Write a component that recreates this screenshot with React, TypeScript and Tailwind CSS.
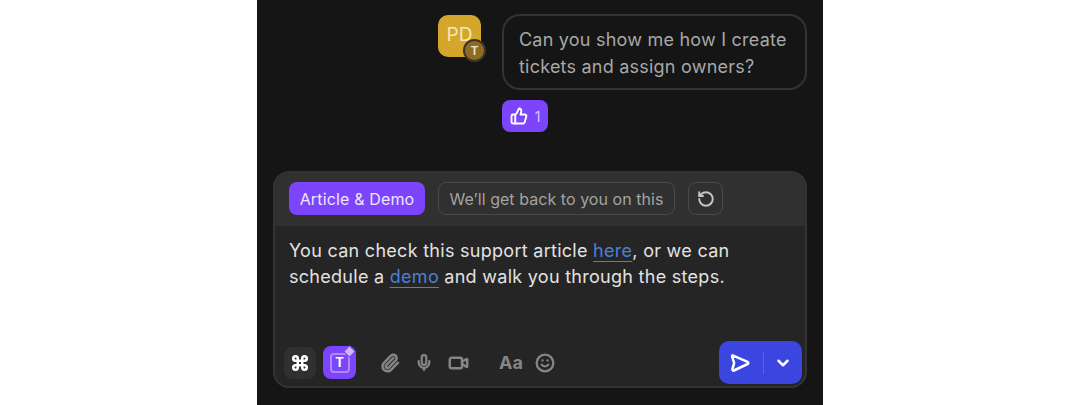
import { ChevronDown, Command, Mic, Paperclip, RotateCcw, Smile, ThumbsUp, Video } from "lucide-react";

const FONT = "font-['Inter','Liberation_Sans',sans-serif]";

function SendIcon() {
  return (
    <svg width="20" height="20" viewBox="0 0 20 20" fill="none" stroke="white" strokeWidth="2.5" strokeLinejoin="round">
      <path d="M3.2 2.6 C2.6 2.1 1.8 2.6 2 3.4 L4 9.4 C4.1 9.8 4.1 10.2 4 10.6 L2.4 16.2 C2.2 17.2 3 17.9 3.9 17.5 L17.6 11 C18.6 10.5 18.6 9.3 17.6 8.8 Z" />
    </svg>
  );
}

function AiTicketIcon() {
  return (
    <div className="relative flex h-[33px] w-[33px] items-center justify-center rounded-lg bg-[#7c45fb]">
      <div className="flex h-[20px] w-[20px] items-center justify-center rounded-[4px] border-2 border-[#ab8cf8] text-[13px] leading-none font-bold text-white">
        T
      </div>
      <div className="absolute top-[1px] right-[2px] h-[9px] w-[9px] rotate-45 rounded-[1px] border border-[#7c45fb] bg-[#cdb8fb]" />
    </div>
  );
}

function ToolIcon({ children, className }: { children: React.ReactNode; className: string }) {
  return <span className={`flex items-center justify-center text-[#858585] ${className}`}>{children}</span>;
}

export default function App() {
  return (
    <div className={`flex h-[405px] w-[1080px] justify-center overflow-hidden bg-white ${FONT}`}>
      <div className="flex h-full w-[566px] flex-col bg-[#151515] pt-[14px] pr-4 pl-4">
        <div className="flex justify-end gap-[21px]">
          <div className="relative mt-px h-[42px] w-[43px] rounded-[10px] bg-[#d4a72c]">
            <div className="flex h-full items-center justify-center pb-px text-[19px] text-[#f6e7bb]">PD</div>
            <div className="absolute -right-[5px] -bottom-[5px] flex h-[23px] w-[23px] items-center justify-center rounded-full border-2 border-[#3a3428] bg-[#8f6a24] text-[12px] font-semibold text-[#f1e6cf]">
              T
            </div>
          </div>
          <div className="h-[76px] w-[305px] rounded-[18px] border-2 border-[#333333] px-[15px] py-[10px] text-[18px] leading-[27px] tracking-[0.22px] text-[#a8a8a8]">
            Can you show me how I create tickets and assign owners?
          </div>
        </div>

        <div className="mt-[10px] mr-[259px] flex h-[32px] w-[46px] items-center justify-center gap-[7px] self-end rounded-lg bg-[#7c45fb] text-[14px] text-[#d9c9fa]">
          <ThumbsUp size={18} strokeWidth={2.5} className="text-white" />
          <span>1</span>
        </div>

        <div className="mt-[39px] flex h-[217px] flex-col overflow-hidden rounded-[16px] border-2 border-[#333333] bg-[#252525]">
          <div className="flex h-[53px] shrink-0 items-center gap-[13px] bg-[#303030] pb-[2px] pl-[14px]">
            <div className="flex h-[33px] w-[136px] items-center justify-center rounded-lg bg-[#7c45fb] text-[16px] tracking-[0.15px] text-[#eee6fd]">
              Article &amp; Demo
            </div>
            <div className="flex h-[33px] w-[237px] items-center justify-center rounded-lg border border-[#4a4a4a] text-[16px] tracking-[0.05px] text-[#a3a3a3]">
              We’ll get back to you on this
            </div>
            <div className="flex h-[33px] w-[35px] items-center justify-center rounded-lg border border-[#4a4a4a] text-[#c4c4c4]">
              <RotateCcw size={18} strokeWidth={2.6} />
            </div>
          </div>

          <div className="px-[14px] pt-[12px] text-[18px] leading-[26px] tracking-[0.28px] text-[#e2e2e2]">
            You can check this support article{" "}
            <span className="text-[#4a7fd9] underline underline-offset-[4px]">here</span>, or we can
            <br />
            schedule a <span className="text-[#4a7fd9] underline underline-offset-[4px]">demo</span> and walk you through the steps.
          </div>

          <div className="mt-auto flex items-end justify-between pr-[3px] pb-[2px] pl-[9px]">
            <div className="flex items-center pb-[5px]">
              <div className="flex h-[32px] w-[32px] items-center justify-center rounded-lg bg-[#303030] text-white">
                <Command size={18} strokeWidth={3.4} />
              </div>
              <div className="ml-[7px]">
                <AiTicketIcon />
              </div>
              <ToolIcon className="ml-[24px] w-[20px]">
                <Paperclip size={20} strokeWidth={3} />
              </ToolIcon>
              <ToolIcon className="ml-[15px] w-[18px]">
                <Mic size={21} strokeWidth={3} />
              </ToolIcon>
              <ToolIcon className="ml-[15px] w-[21px]">
                <Video size={22} strokeWidth={2.8} />
              </ToolIcon>
              <ToolIcon className="ml-[30px] w-[24px] text-[18px] font-bold">Aa</ToolIcon>
              <ToolIcon className="ml-[12px] w-[20px]">
                <Smile size={20} strokeWidth={2.8} />
              </ToolIcon>
            </div>
            <div className="flex h-[43px] w-[83px] items-center rounded-[10px] bg-[#3b46e0] pl-[11px]">
              <SendIcon />
              <div className="ml-[13px] h-[22px] w-px bg-[#5a63e8]" />
              <ChevronDown size={18} strokeWidth={3.4} className="ml-[10px] text-white" />
            </div>
          </div>
        </div>
      </div>
    </div>
  );
}
